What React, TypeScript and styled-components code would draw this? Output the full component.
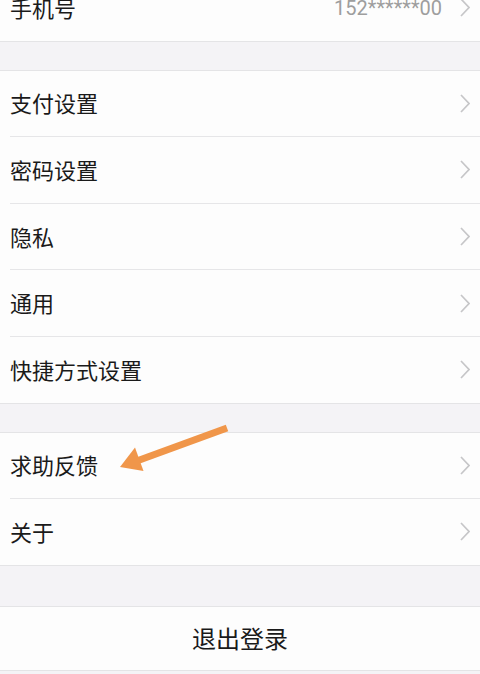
import React from 'react'
import styled, { createGlobalStyle } from 'styled-components'

const GlobalStyle = createGlobalStyle`
  html, body {
    margin: 0;
    padding: 0;
    background: #f4f3f6;
    overflow: hidden;
  }
  body {
    font-family: "Noto Sans CJK SC", "Noto Sans", sans-serif;
  }
`

const Page = styled.div`
  width: 480px;
  height: 674px;
  background: #f4f3f6;
  overflow: hidden;
  display: flex;
  flex-direction: column;
`

const Group = styled.div<{ gapAbove: number, noTop?: boolean }>`
  margin-top: ${(props) => props.gapAbove}px;
  background: #fdfdfd;
  border-top: ${(props) => props.noTop ? 'none' : '1px solid #e4e4e6'};
  border-bottom: 1px solid #e4e4e6;
  flex-shrink: 0;
`

const Row = styled.div`
  position: relative;
  padding-left: 10px;
  background: #fdfdfd;

  &:not(:last-child) > div {
    border-bottom: 1px solid #e6e6e8;
  }
`

const RowInner = styled.div`
  height: 65.6px;
  display: flex;
  align-items: center;
  padding-right: 10px;
`

const Label = styled.span`
  flex: 1;
  font-size: 22px;
  color: #1a1a1a;
  margin-top: -2px;
`

const Value = styled.span`
  font-family: Roboto, "Liberation Sans", sans-serif;
  font-size: 20px;
  color: #9e9e9e;
  margin-right: 18px;
`

const ActionRow = styled.div`
  height: 65.6px;
  display: flex;
  align-items: center;
  justify-content: center;
  font-size: 24px;
  color: #1a1a1a;
  margin-top: -2px;
`

const Arrow = styled.svg`
  position: absolute;
  left: 0;
  top: -21px;
  width: 240px;
  height: 80px;
  pointer-events: none;
`

const Chevron = () => (
  <svg width='10' height='19' viewBox='0 0 10 19'>
    <polyline
      points='1,1 9,9.5 1,18'
      fill='none'
      stroke='#c6c6c8'
      strokeWidth='1.7'
    />
  </svg>
)

const SettingRow = ({ label, value, children }: { label: string, value?: string, children?: React.ReactNode }) => (
  <Row>
    <RowInner>
      <Label>{label}</Label>
      {value && <Value>{value}</Value>}
      <Chevron />
    </RowInner>
    {children}
  </Row>
)

const App = () => {
  return (
    <Page>
      <GlobalStyle />
      <Group gapAbove={-25} noTop>
        <SettingRow label='手机号' value='152******00' />
      </Group>
      <Group gapAbove={28}>
        <SettingRow label='支付设置' />
        <SettingRow label='密码设置' />
        <SettingRow label='隐私' />
        <SettingRow label='通用' />
        <SettingRow label='快捷方式设置' />
      </Group>
      <Group gapAbove={28}>
        <SettingRow label='求助反馈'>
          <Arrow viewBox='0 412 240 80'>
            <line x1='227' y1='428' x2='134' y2='462' stroke='#f0964a' strokeWidth='7' />
            <polygon points='120,467 135,447.5 143.5,471' fill='#f0964a' />
          </Arrow>
        </SettingRow>
        <SettingRow label='关于' />
      </Group>
      <Group gapAbove={40}>
        <ActionRow>退出登录</ActionRow>
      </Group>
    </Page>
  )
}

export default App
